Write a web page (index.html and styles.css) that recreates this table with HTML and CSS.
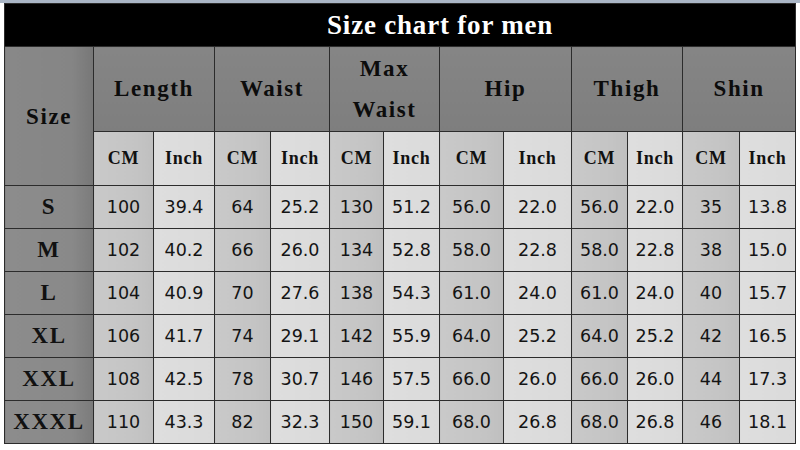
FILE: index.html
```html
<!DOCTYPE html>
<html>
<head>
<meta charset="utf-8">
<link rel="stylesheet" href="styles.css">
</head>
<body>
<div class="topline"></div>
<div class="wrap">
<table class="chart">
<colgroup>
<col style="width:89px"><col style="width:60px"><col style="width:61px"><col style="width:56px"><col style="width:59px"><col style="width:54px"><col style="width:56px"><col style="width:64px"><col style="width:68px"><col style="width:56px"><col style="width:55px"><col style="width:57px"><col style="width:56px">
</colgroup>
<tr class="r-title"><td colspan="13" class="title">Size chart for men</td></tr>
<tr class="r-h1">
<td rowspan="2" class="hsize">Size</td>
<td colspan="2" class="hd">Length</td>
<td colspan="2" class="hd">Waist</td>
<td colspan="2" class="hd two">Max<br>Waist</td>
<td colspan="2" class="hd">Hip</td>
<td colspan="2" class="hd">Thigh</td>
<td colspan="2" class="hd">Shin</td>
</tr>
<tr class="r-h2">
<td class="sub cm">CM</td><td class="sub in">Inch</td>
<td class="sub cm">CM</td><td class="sub in">Inch</td>
<td class="sub cm">CM</td><td class="sub in">Inch</td>
<td class="sub cm">CM</td><td class="sub in">Inch</td>
<td class="sub cm">CM</td><td class="sub in">Inch</td>
<td class="sub cm">CM</td><td class="sub in">Inch</td>
</tr>
<tr class="r-d"><td class="sz">S</td><td class="v cm">100</td><td class="v in">39.4</td><td class="v cm">64</td><td class="v in">25.2</td><td class="v cm">130</td><td class="v in">51.2</td><td class="v cm">56.0</td><td class="v in">22.0</td><td class="v cm">56.0</td><td class="v in">22.0</td><td class="v cm">35</td><td class="v in">13.8</td></tr>
<tr class="r-d"><td class="sz">M</td><td class="v cm">102</td><td class="v in">40.2</td><td class="v cm">66</td><td class="v in">26.0</td><td class="v cm">134</td><td class="v in">52.8</td><td class="v cm">58.0</td><td class="v in">22.8</td><td class="v cm">58.0</td><td class="v in">22.8</td><td class="v cm">38</td><td class="v in">15.0</td></tr>
<tr class="r-d"><td class="sz">L</td><td class="v cm">104</td><td class="v in">40.9</td><td class="v cm">70</td><td class="v in">27.6</td><td class="v cm">138</td><td class="v in">54.3</td><td class="v cm">61.0</td><td class="v in">24.0</td><td class="v cm">61.0</td><td class="v in">24.0</td><td class="v cm">40</td><td class="v in">15.7</td></tr>
<tr class="r-d"><td class="sz">XL</td><td class="v cm">106</td><td class="v in">41.7</td><td class="v cm">74</td><td class="v in">29.1</td><td class="v cm">142</td><td class="v in">55.9</td><td class="v cm">64.0</td><td class="v in">25.2</td><td class="v cm">64.0</td><td class="v in">25.2</td><td class="v cm">42</td><td class="v in">16.5</td></tr>
<tr class="r-d"><td class="sz">XXL</td><td class="v cm">108</td><td class="v in">42.5</td><td class="v cm">78</td><td class="v in">30.7</td><td class="v cm">146</td><td class="v in">57.5</td><td class="v cm">66.0</td><td class="v in">26.0</td><td class="v cm">66.0</td><td class="v in">26.0</td><td class="v cm">44</td><td class="v in">17.3</td></tr>
<tr class="r-d"><td class="sz">XXXL</td><td class="v cm">110</td><td class="v in">43.3</td><td class="v cm">82</td><td class="v in">32.3</td><td class="v cm">150</td><td class="v in">59.1</td><td class="v cm">68.0</td><td class="v in">26.8</td><td class="v cm">68.0</td><td class="v in">26.8</td><td class="v cm">46</td><td class="v in">18.1</td></tr>
</table>
</div>
</body>
</html>
```
FILE: styles.css
```css
html, body {
  margin: 0;
  padding: 0;
  background: #ffffff;
}
.topline {
  height: 3px;
  background: #aab6c6;
}
.wrap {
  padding-left: 4px;
}
.chart {
  border-collapse: collapse;
  table-layout: fixed;
  width: 792px;
}
.chart td {
  border: 1px solid #2c2c2c;
  padding: 0;
  text-align: center;
  vertical-align: middle;
  color: #111;
}
.r-title td { height: 42px; }
.r-h1 td { height: 84px; }
.r-h2 td { height: 53px; }
.r-d td { height: 42px; }

.chart .title {
  background: #000;
  color: #fff;
  font-family: "Liberation Serif", serif;
  font-weight: bold;
  font-size: 27px;
  letter-spacing: 0.8px;
  padding-left: 80px;
}
.chart .hd, .chart .hsize {
  font-family: "Liberation Serif", serif;
  font-weight: bold;
  font-size: 23px;
  letter-spacing: 1.6px;
  color: #0c0c0c;
  background: linear-gradient(to bottom, #858585, #7e7e7e);
}
.chart .hsize {
  background: linear-gradient(to right, #888888 0%, #858585 75%, #777777 100%);
  padding-top: 2px;
}
.chart .two {
  line-height: 41px;
}
.sub {
  font-family: "Liberation Serif", serif;
  font-weight: bold;
  font-size: 18px;
  letter-spacing: 0.8px;
}
.cm {
  background: linear-gradient(to right, #c9c9c9 0%, #c4c4c4 70%, #bfbfbf 100%);
}
.in {
  background: linear-gradient(to right, #dedede 0%, #dadada 100%);
}
.sz {
  font-family: "Liberation Serif", serif;
  font-weight: bold;
  font-size: 23px;
  letter-spacing: 1.6px;
  background: linear-gradient(to right, #8c8c8c 0%, #898989 75%, #7b7b7b 100%);
}
.chart .v {
  font-family: "DejaVu Sans", sans-serif;
  font-size: 17.5px;
  color: #141414;
}
```
